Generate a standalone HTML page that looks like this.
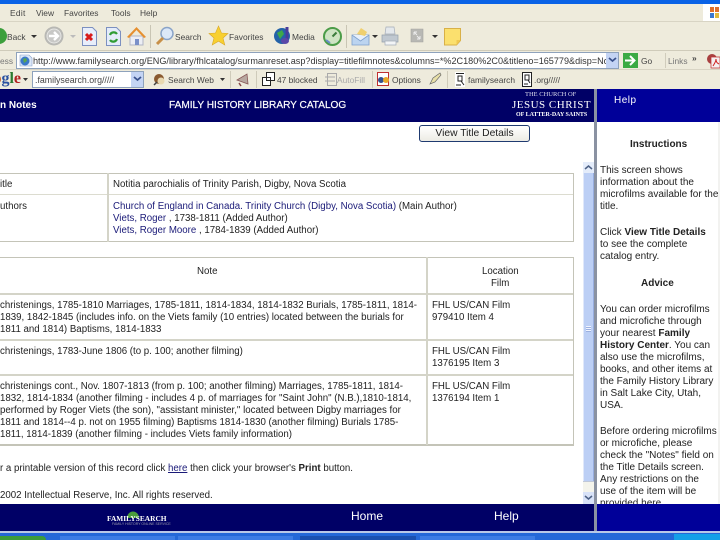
<!DOCTYPE html>
<html><head><meta charset="utf-8">
<style>
html,body{margin:0;padding:0;width:720px;height:540px;overflow:hidden;background:#fff}
#p{position:relative;width:720px;height:540px;overflow:hidden;font-family:"Liberation Sans",sans-serif;font-size:9.7px;color:#222;filter:blur(.25px)}
.a,.t{position:absolute}
.t{white-space:nowrap;line-height:12px}
.b{font-weight:bold}
.l{color:#1a1a78}
.ui{color:#444;font-size:8.4px}
.h{font-size:10px}
svg{position:absolute;overflow:visible}
</style></head><body><div id="p">

<!-- chrome -->
<div class="a" style="left:0;top:0;width:720px;height:4px;background:#0a62e6"></div>
<div class="a" style="left:0;top:4px;width:720px;height:85px;background:#eeebdc"></div>
<div class="a" style="left:0;top:21px;width:720px;height:1px;background:#d8d4c4"></div>
<div class="a" style="left:0;top:50px;width:720px;height:1px;background:#cfcbba"></div>
<div class="a" style="left:0;top:69px;width:720px;height:1px;background:#d8d4c4"></div>
<div class="a" style="left:703px;top:4px;width:17px;height:17px;background:#fff"></div>
<svg style="left:709px;top:6px" width="11" height="13"><path d="M1 1h4v5H1zM6 1h4v5H6z" fill="#e0702c"/><path d="M1 7h4v5H1z" fill="#3a78d0"/><path d="M6 7h4v5H6z" fill="#e0b83c"/></svg>

<!-- menu -->
<span class="t ui" style="left:10px;top:7px;letter-spacing:.3px">Edit</span>
<span class="t ui" style="left:36px;top:7px">View</span>
<span class="t ui" style="left:64px;top:7px">Favorites</span>
<span class="t ui" style="left:111px;top:7px">Tools</span>
<span class="t ui" style="left:140px;top:7px">Help</span>

<!-- toolbar -->
<svg style="left:-6px;top:27px" width="12" height="18"><circle cx="5" cy="9" r="8" fill="#3c9f3c"/></svg>
<span class="t ui" style="left:7px;top:31px">Back</span>
<svg style="left:31px;top:35px" width="6" height="4"><path d="M0 0h6L3 3z" fill="#333"/></svg>
<svg style="left:44px;top:26px" width="20" height="20"><circle cx="10" cy="10" r="9.5" fill="#b8b8b4"/><circle cx="10" cy="10" r="7" fill="#c8c8c6" stroke="#e6e6e4"/><path d="M5 10h9M10 6l4 4-4 4" stroke="#fff" stroke-width="2.4" fill="none"/></svg>
<svg style="left:70px;top:35px" width="6" height="4"><path d="M0 0h6L3 3z" fill="#bbb"/></svg>
<svg style="left:82px;top:27px" width="15" height="19"><path d="M.5.5h10l4 4v14H.5z" fill="#e8eefb" stroke="#7c90c0"/><path d="M4 7l6 6M10 7l-6 6" stroke="#d81c1c" stroke-width="3"/></svg>
<svg style="left:106px;top:27px" width="15" height="19"><path d="M.5.5h10l4 4v14H.5z" fill="#e4ecfa" stroke="#7c90c0"/><path d="M11 7a4 4 0 0 0-7 1M4 13a4 4 0 0 0 7-1" stroke="#2f9c34" stroke-width="2.2" fill="none"/></svg>
<svg style="left:127px;top:26px" width="19" height="20"><path d="M3 10v9h13v-9z" fill="#eceef4" stroke="#b0b4c4"/><path d="M0 11L9.5 1 19 11l-2 1L9.5 4 2 12z" fill="#e69030"/><path d="M8 13h4v6H8z" fill="#7a90c8"/></svg>
<div class="a" style="left:150px;top:25px;width:1px;height:23px;background:#c9c5b4"></div>
<svg style="left:155px;top:26px" width="20" height="20"><circle cx="12" cy="7.5" r="6" fill="#dce8f8" stroke="#8aa4c8" stroke-width="1.5"/><path d="M8 12l-6 6" stroke="#c89048" stroke-width="3"/></svg>
<span class="t ui" style="left:175px;top:31px">Search</span>
<svg style="left:209px;top:26px" width="19" height="20"><path d="M9.5 0l3 7 6.5.5-5 4.5 1.8 7-6.3-3.800L3.200 19 5 12 0 7.5 6.5 7z" fill="#f8d030" stroke="#d8a828" stroke-width=".6"/></svg>
<span class="t ui" style="left:229px;top:31px">Favorites</span>
<svg style="left:273px;top:26px" width="20" height="20"><circle cx="9" cy="10" r="8" fill="#2462a8"/><path d="M4 7l5-3 2 4-4 5z" fill="#3ea848"/><path d="M14 1v13" stroke="#4a3c9c" stroke-width="3"/><ellipse cx="12" cy="15" rx="4" ry="3" fill="#5a48a8"/></svg>
<span class="t ui" style="left:292px;top:31px">Media</span>
<svg style="left:323px;top:27px" width="19" height="19"><circle cx="9.5" cy="9.5" r="8.5" fill="#cfe4c4" stroke="#4c9c48" stroke-width="2"/><path d="M9.5 9.5l4-4" stroke="#3c7c3c" stroke-width="2"/><path d="M3 13l4 3" stroke="#6a8cc8" stroke-width="2"/></svg>
<div class="a" style="left:346px;top:25px;width:1px;height:23px;background:#c9c5b4"></div>
<svg style="left:352px;top:27px" width="20" height="19"><path d="M0 8h17v10H0z" fill="#bcd4f0" stroke="#7ea0cc" stroke-width=".8"/><path d="M0 8l8.5 6L17 8" fill="#e8f0fb" stroke="#7ea0cc" stroke-width=".8"/><path d="M5 7l4-6 6 4-2 4z" fill="#f0d070"/></svg>
<svg style="left:372px;top:35px" width="6" height="4"><path d="M0 0h6L3 3z" fill="#333"/></svg>
<svg style="left:381px;top:26px" width="19" height="20"><path d="M5 1h8l1 7H4z" fill="#e4e8ec" stroke="#a4acb8" stroke-width=".7"/><path d="M1 9h16v7H1z" fill="#c0c8d0" stroke="#94a0ac" stroke-width=".7"/><path d="M4 15h11v4H4z" fill="#f2f4f6" stroke="#a4acb8" stroke-width=".7"/></svg>
<svg style="left:411px;top:28px" width="13" height="15"><path d="M0 1h12v13H0z" fill="#b8b8b4" stroke="#a4a4a0" stroke-width=".6"/><path d="M3 4l3 3M3 4h3M3 4v3M9 11L6 8M9 11H6M9 11V8" stroke="#eee" fill="none"/></svg>
<svg style="left:432px;top:35px" width="6" height="4"><path d="M0 0h6L3 3z" fill="#333"/></svg>
<svg style="left:444px;top:28px" width="17" height="18"><path d="M.5.5h16v12l-4 4.5H.5z" fill="#fbe06e" stroke="#d8b048"/><path d="M12.5 17v-5h4" fill="#f0c850"/></svg>

<!-- address -->
<span class="t ui" style="left:0;top:55px;color:#777">ess</span>
<div class="a" style="left:16px;top:52px;width:603px;height:17px;box-sizing:border-box;border:1px solid #8ea2bc;background:#fff"></div>
<svg style="left:19px;top:53px" width="14" height="14"><path d="M1 2h9l3 3v8H1z" fill="#dce8f8" stroke="#8aa0c8" stroke-width=".6"/><circle cx="6" cy="8" r="4.5" fill="#3a78c8"/><path d="M4 6l3-1 1 3-3 2z" fill="#58a850"/></svg>
<span class="t" style="left:33px;top:55px;font-size:9.1px;color:#333;width:573px;overflow:hidden">http://www.familysearch.org/ENG/library/fhlcatalog/surmanreset.asp?display=titlefilmnotes&amp;columns=*%2C180%2C0&amp;titleno=165779&amp;disp=Notitia+</span>
<div class="a" style="left:606px;top:53px;width:12px;height:15px;background:#c4d4f4"></div>
<svg style="left:609px;top:58px" width="7" height="5"><path d="M0 0l3.5 3L7 0" stroke="#39518c" stroke-width="1.8" fill="none"/></svg>
<svg style="left:623px;top:53px" width="15" height="15"><rect width="15" height="15" fill="#3aaa44"/><path d="M2 7.5h9M7 3l4.5 4.5L7 12" stroke="#fff" stroke-width="2" fill="none"/></svg>
<span class="t ui" style="left:641px;top:55px">Go</span>
<div class="a" style="left:665px;top:53px;width:1px;height:15px;background:#d0ccbc"></div>
<span class="t ui" style="left:668px;top:55px;color:#777">Links</span>
<span class="t ui" style="left:692px;top:52px;font-weight:bold">»</span>
<svg style="left:707px;top:54px" width="13" height="14"><circle cx="5" cy="5" r="5" fill="#a84040"/><path d="M4 3h9v11H4z" fill="#f4f0f0" stroke="#c03030" stroke-width=".7"/><path d="M6 12c2-3 3-5 3-7 0 3 1 4 3 5" stroke="#d02020" fill="none"/></svg>

<!-- google bar -->
<span class="t" style="left:-27px;top:70px;font-family:'Liberation Serif',serif;font-size:16px;font-weight:bold;line-height:18px;color:#2a50a0">Go<span style="color:#b85020">o</span>g<span style="color:#2a7a30">l</span><span style="color:#b02020">e</span></span>
<svg style="left:23px;top:78px" width="5" height="3"><path d="M0 0h5L2.5 3z" fill="#333"/></svg>
<div class="a" style="left:32px;top:71px;width:112px;height:17px;box-sizing:border-box;border:1px solid #8ea2bc;background:#fff"></div>
<span class="t ui" style="left:35px;top:74px;font-size:8.8px">.familysearch.org/////</span>
<div class="a" style="left:131px;top:72px;width:12px;height:15px;background:#c4d4f4"></div>
<svg style="left:134px;top:77px" width="7" height="5"><path d="M0 0l3.5 3L7 0" stroke="#39518c" stroke-width="1.8" fill="none"/></svg>
<svg style="left:153px;top:73px" width="13" height="13"><circle cx="6" cy="6" r="5" fill="#8a5a30"/><circle cx="8" cy="8" r="3.5" fill="#e8d8b0"/><path d="M1 12l3-3" stroke="#444" stroke-width="1.5"/></svg>
<span class="t ui" style="left:168px;top:74px">Search Web</span>
<svg style="left:220px;top:78px" width="5" height="3"><path d="M0 0h5L2.5 3z" fill="#333"/></svg>
<div class="a" style="left:230px;top:71px;width:1px;height:17px;background:#cfcbba"></div>
<svg style="left:236px;top:72px" width="13" height="15"><path d="M1 8l10-6 1 10z" fill="#b8a8a0" stroke="#885858" stroke-width=".8"/><path d="M3 11l2 3" stroke="#884848" stroke-width="1.5"/></svg>
<div class="a" style="left:256px;top:71px;width:1px;height:17px;background:#cfcbba"></div>
<svg style="left:262px;top:72px" width="13" height="15"><path d="M4.5.5h8v8h-8zM.5 5.5h8v8h-8z" fill="#fff" stroke="#222"/></svg>
<span class="t ui" style="left:277px;top:74px">47 blocked</span>
<svg style="left:324px;top:72px" width="13" height="15"><path d="M3.5 1.5h9v12h-9z" fill="#eeebdc" stroke="#aaa"/><path d="M1 5h5M1 9h5M6 5h5M6 9h5" stroke="#aaa"/></svg>
<span class="t ui" style="left:337px;top:74px;color:#aaa">AutoFill</span>
<div class="a" style="left:372px;top:71px;width:1px;height:17px;background:#cfcbba"></div>
<svg style="left:377px;top:72px" width="13" height="15"><path d="M.5.5h11v13H.5z" fill="#fff" stroke="#c03030"/><circle cx="4" cy="8" r="3" fill="#33508c"/><circle cx="9" cy="8" r="3" fill="#e8a828"/></svg>
<span class="t ui" style="left:392px;top:74px">Options</span>
<svg style="left:428px;top:72px" width="14" height="14"><path d="M2 12l3-6 7-5 1 2-6 7z" fill="#e8e0a8" stroke="#666" stroke-width=".7"/></svg>
<div class="a" style="left:447px;top:71px;width:1px;height:17px;background:#cfcbba"></div>
<svg style="left:455px;top:72px" width="10" height="15"><rect width="10" height="15" fill="#fff"/><path d="M1 1.5h8M3 4h4v5H3zM6 9l3 4M1 13h5" stroke="#222" fill="none"/></svg>
<span class="t ui" style="left:468px;top:74px">familysearch</span>
<svg style="left:522px;top:72px" width="10" height="15"><path d="M.5.5h9v14h-9z" fill="#fff" stroke="#222"/><path d="M3 3h4v5H3zM6 8l2 3M2 12h4" stroke="#222" fill="none"/></svg>
<span class="t ui" style="left:534px;top:74px">.org/////</span>

<!-- header -->
<div class="a" style="left:0;top:89px;width:595px;height:33px;background:#000066"></div>
<div class="a" style="left:596px;top:89px;width:124px;height:33px;background:#000099"></div>
<span class="t b" style="left:0;top:100px;color:#fff;font-size:10px">n Notes</span>
<span class="t" style="left:169px;top:100px;color:#fff;font-size:10.1px;-webkit-text-stroke:.2px #fff">FAMILY HISTORY LIBRARY CATALOG</span>
<span class="t" style="left:525px;top:91px;color:#dde;font-family:'Liberation Serif',serif;font-size:6.5px;line-height:8px">THE CHURCH OF</span>
<span class="t" style="left:512px;top:99px;color:#fff;font-family:'Liberation Serif',serif;font-size:11px;letter-spacing:.5px">JESUS CHRIST</span>
<span class="t b" style="left:516px;top:111px;color:#fff;font-family:'Liberation Serif',serif;font-size:6px;line-height:8px">OF LATTER-DAY SAINTS</span>
<span class="t" style="left:614px;top:95px;color:#fff;font-size:10px;letter-spacing:.5px">Help</span>

<!-- button -->
<div class="a" style="left:419px;top:125px;width:111px;height:17px;box-sizing:border-box;border:1px solid #1f3a70;border-radius:3px;background:linear-gradient(#fff,#ecebe4);text-align:center;line-height:16px;font-size:10.3px;color:#222">View Title Details</div>

<!-- table 1 -->
<div class="a" style="left:-2px;top:173px;width:576px;height:69px;box-sizing:border-box;border:1px solid #c4c4b8"></div>
<div class="a" style="left:0;top:194px;width:573px;height:1px;background:#dcdcd0"></div>
<div class="a" style="left:107px;top:173px;width:2px;height:69px;background:#d4d4c8"></div>
<span class="t" style="left:0;top:179px">itle</span>
<span class="t" style="left:0;top:201px">uthors</span>
<span class="t" style="left:113px;top:179px">Notitia parochialis of Trinity Parish, Digby, Nova Scotia</span>
<span class="t" style="left:113px;top:201px"><span class="l">Church of England in Canada. Trinity Church (Digby, Nova Scotia)</span> (Main Author)</span>
<span class="t" style="left:113px;top:213px"><span class="l">Viets, Roger</span> , 1738-1811 (Added Author)</span>
<span class="t" style="left:113px;top:225px"><span class="l">Viets, Roger Moore</span> , 1784-1839 (Added Author)</span>

<!-- table 2 -->
<div class="a" style="left:-2px;top:257px;width:576px;height:189px;box-sizing:border-box;border:1px solid #c4c4b8;border-width:1px 1px 2px 1px"></div>
<div class="a" style="left:0;top:293px;width:573px;height:2px;background:#d4d4c8"></div>
<div class="a" style="left:0;top:339px;width:573px;height:2px;background:#d4d4c8"></div>
<div class="a" style="left:0;top:374px;width:573px;height:2px;background:#d4d4c8"></div>
<div class="a" style="left:426px;top:257px;width:2px;height:188px;background:#d4d4c8"></div>
<span class="t" style="left:197px;top:266px">Note</span>
<span class="t" style="left:482px;top:266px">Location</span>
<span class="t" style="left:491px;top:278px">Film</span>

<span class="t" style="left:0;top:300px">christenings, 1785-1810 Marriages, 1785-1811, 1814-1834, 1814-1832 Burials, 1785-1811, 1814-</span>
<span class="t" style="left:0;top:312px">1839, 1842-1845 (includes info. on the Viets family (10 entries) located between the burials for</span>
<span class="t" style="left:0;top:324px">1811 and 1814) Baptisms, 1814-1833</span>
<span class="t" style="left:432px;top:300px">FHL US/CAN Film</span>
<span class="t" style="left:432px;top:312px">979410 Item 4</span>

<span class="t" style="left:0;top:346px">christenings, 1783-June 1806 (to p. 100; another filming)</span>
<span class="t" style="left:432px;top:346px">FHL US/CAN Film</span>
<span class="t" style="left:432px;top:358px">1376195 Item 3</span>

<span class="t" style="left:0;top:381px">christenings cont., Nov. 1807-1813 (from p. 100; another filming) Marriages, 1785-1811, 1814-</span>
<span class="t" style="left:0;top:393px">1832, 1814-1834 (another filming - includes 4 p. of marriages for "Saint John" (N.B.),1810-1814,</span>
<span class="t" style="left:0;top:405px">performed by Roger Viets (the son), "assistant minister," located between Digby marriages for</span>
<span class="t" style="left:0;top:417px">1811 and 1814--4 p. not on 1955 filming) Baptisms 1814-1830 (another filming) Burials 1785-</span>
<span class="t" style="left:0;top:429px">1811, 1814-1839 (another filming - includes Viets family information)</span>
<span class="t" style="left:432px;top:381px">FHL US/CAN Film</span>
<span class="t" style="left:432px;top:393px">1376194 Item 1</span>

<span class="t" style="left:0;top:463px">r a printable version of this record click <span class="l" style="text-decoration:underline">here</span> then click your browser's <b>Print</b> button.</span>
<span class="t" style="left:0;top:490px">2002 Intellectual Reserve, Inc. All rights reserved.</span>

<!-- scrollbar -->
<div class="a" style="left:583px;top:162px;width:11px;height:342px;background:#c2d2f6"></div>
<div class="a" style="left:583px;top:162px;width:11px;height:11px;background:#e4ecfa"></div>
<svg style="left:585px;top:165px" width="7" height="5"><path d="M0 4l3.5-3L7 4" stroke="#4d6185" stroke-width="1.5" fill="none"/></svg>
<div class="a" style="left:583px;top:173px;width:11px;height:308px;box-sizing:border-box;background:#bccff5;border-left:1px solid #e0e8fa;border-right:1px solid #98aee0"></div>
<div class="a" style="left:586px;top:326px;width:5px;height:6px;background:repeating-linear-gradient(#f0f4ff 0 1px,#9cb0e0 1px 2px)"></div>
<div class="a" style="left:583px;top:481px;width:11px;height:11px;background:#f4f4ec;border-top:1px solid #c0c8d8;box-sizing:border-box"></div>
<div class="a" style="left:583px;top:492px;width:11px;height:12px;background:#d8e2f8"></div>
<svg style="left:585px;top:495px" width="7" height="5"><path d="M0 1l3.5 3L7 1" stroke="#4d6185" stroke-width="1.5" fill="none"/></svg>

<!-- help -->
<span class="t h b" style="left:630px;top:139px">Instructions</span>
<span class="t h" style="left:600px;top:165px">This screen shows</span>
<span class="t h" style="left:600px;top:177px">information about the</span>
<span class="t h" style="left:600px;top:189px">microfilms available for the</span>
<span class="t h" style="left:600px;top:201px">title.</span>
<span class="t h" style="left:600px;top:227px">Click <b>View Title Details</b></span>
<span class="t h" style="left:600px;top:239px">to see the complete</span>
<span class="t h" style="left:600px;top:251px">catalog entry.</span>
<span class="t h b" style="left:641px;top:278px">Advice</span>
<span class="t h" style="left:600px;top:304px">You can order microfilms</span>
<span class="t h" style="left:600px;top:316px">and microfiche through</span>
<span class="t h" style="left:600px;top:328px">your nearest <b>Family</b></span>
<span class="t h" style="left:600px;top:340px"><b>History Center</b>. You can</span>
<span class="t h" style="left:600px;top:352px">also use the microfilms,</span>
<span class="t h" style="left:600px;top:364px">books, and other items at</span>
<span class="t h" style="left:600px;top:376px">the Family History Library</span>
<span class="t h" style="left:600px;top:388px">in Salt Lake City, Utah,</span>
<span class="t h" style="left:600px;top:400px">USA.</span>
<span class="t h" style="left:600px;top:426px">Before ordering microfilms</span>
<span class="t h" style="left:600px;top:438px">or microfiche, please</span>
<span class="t h" style="left:600px;top:450px">check the "Notes" field on</span>
<span class="t h" style="left:600px;top:462px">the Title Details screen.</span>
<span class="t h" style="left:600px;top:474px">Any restrictions on the</span>
<span class="t h" style="left:600px;top:486px">use of the item will be</span>
<span class="t h" style="left:600px;top:498px">provided here.</span>
<div class="a" style="left:718px;top:122px;width:2px;height:382px;background:#f2f2f0"></div>

<!-- footer -->
<div class="a" style="left:0;top:504px;width:595px;height:27px;background:#000066"></div>
<div class="a" style="left:596px;top:504px;width:124px;height:27px;background:#000099"></div>
<div class="a" style="left:594px;top:89px;width:2.5px;height:443px;background:#8a92a2"></div>
<svg style="left:126px;top:510px" width="14" height="8"><path d="M1 8a6 6.5 0 0 1 12 0z" fill="#4a9c3c"/></svg>
<span class="t b" style="left:107px;top:513px;color:#fff;font-family:'Liberation Serif',serif;font-size:7.4px">FAMILYSEARCH</span>
<span class="t" style="left:112px;top:522px;color:#99a;font-size:3.5px;line-height:4px">FAMILY HISTORY ONLINE SERVICE</span>
<span class="t" style="left:351px;top:510px;color:#fff;font-size:12px">Home</span>
<span class="t" style="left:494px;top:510px;color:#fff;font-size:12px">Help</span>

<!-- taskbar -->
<div class="a" style="left:0;top:531px;width:720px;height:2px;background:#b8c8e8"></div>
<div class="a" style="left:0;top:533px;width:720px;height:7px;background:#2468d8"></div>
<div class="a" style="left:0;top:536px;width:46px;height:4px;background:#3c9c3c;border-radius:0 4px 0 0"></div>
<div class="a" style="left:60px;top:536px;width:115px;height:4px;background:#3c7ce4"></div>
<div class="a" style="left:178px;top:536px;width:115px;height:4px;background:#3c7ce4"></div>
<div class="a" style="left:300px;top:536px;width:116px;height:4px;background:#1a50b0"></div>
<div class="a" style="left:420px;top:536px;width:115px;height:4px;background:#3c7ce4"></div>
<div class="a" style="left:674px;top:534px;width:46px;height:6px;background:#14a0e8"></div>

</div></body></html>
